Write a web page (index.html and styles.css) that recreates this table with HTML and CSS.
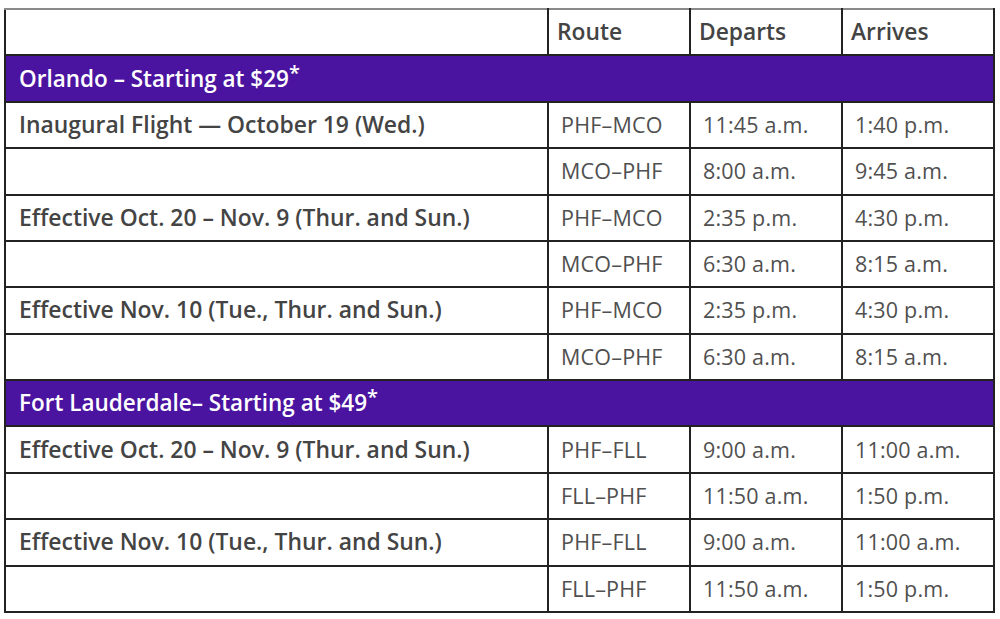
FILE: index.html
```html
<!DOCTYPE html>
<html>
<head>
<meta charset="utf-8">
<link rel="stylesheet" href="styles.css">
</head>
<body>
<table class="schedule">
  <colgroup>
    <col class="c-desc"><col class="c-route"><col class="c-time"><col class="c-time">
  </colgroup>
  <thead>
    <tr class="head">
      <th></th><th>Route</th><th>Departs</th><th>Arrives</th>
    </tr>
  </thead>
  <tbody>
    <tr class="group"><td colspan="4">Orlando – Starting at $29<sup>*</sup></td></tr>
    <tr><td class="label">Inaugural Flight — October 19 (Wed.)</td><td>PHF–MCO</td><td>11:45 a.m.</td><td>1:40 p.m.</td></tr>
    <tr><td class="label"></td><td>MCO–PHF</td><td>8:00 a.m.</td><td>9:45 a.m.</td></tr>
    <tr><td class="label">Effective Oct. 20 – Nov. 9 (Thur. and Sun.)</td><td>PHF–MCO</td><td>2:35 p.m.</td><td>4:30 p.m.</td></tr>
    <tr><td class="label"></td><td>MCO–PHF</td><td>6:30 a.m.</td><td>8:15 a.m.</td></tr>
    <tr><td class="label">Effective Nov. 10 (Tue., Thur. and Sun.)</td><td>PHF–MCO</td><td>2:35 p.m.</td><td>4:30 p.m.</td></tr>
    <tr><td class="label"></td><td>MCO–PHF</td><td>6:30 a.m.</td><td>8:15 a.m.</td></tr>
    <tr class="group"><td colspan="4">Fort Lauderdale– Starting at $49<sup>*</sup></td></tr>
    <tr><td class="label">Effective Oct. 20 – Nov. 9 (Thur. and Sun.)</td><td>PHF–FLL</td><td>9:00 a.m.</td><td>11:00 a.m.</td></tr>
    <tr><td class="label"></td><td>FLL–PHF</td><td>11:50 a.m.</td><td>1:50 p.m.</td></tr>
    <tr><td class="label">Effective Nov. 10 (Tue., Thur. and Sun.)</td><td>PHF–FLL</td><td>9:00 a.m.</td><td>11:00 a.m.</td></tr>
    <tr><td class="label"></td><td>FLL–PHF</td><td>11:50 a.m.</td><td>1:50 p.m.</td></tr>
  </tbody>
</table>
</body>
</html>
```
FILE: styles.css
```css
html, body {
  margin: 0;
  padding: 0;
  background: #ffffff;
}
body {
  padding: 8px 0 0 4px;
}
.schedule {
  border-collapse: collapse;
  width: 990px;
  table-layout: fixed;
  font-family: "Open Sans", "Liberation Sans", sans-serif;
  color: #505050;
}
.c-desc { width: 543px; }
.c-route { width: 142px; }
.c-time { width: 152px; }
.schedule th,
.schedule td {
  border: 2px solid #222222;
  height: 44.38px;
  padding: 0 12px;
  text-align: left;
  vertical-align: middle;
  white-space: nowrap;
  font-size: 21.5px;
  font-weight: 400;
  line-height: 26px;
  letter-spacing: 0.2px;
}
.schedule thead th {
  border-top-color: #8a8a8a;
  font-size: 22.8px;
  font-weight: 600;
  color: #444444;
  padding-left: 8px;
  letter-spacing: 0;
}
.schedule td.label {
  font-size: 22.9px;
  font-weight: 600;
  color: #444444;
  padding-left: 13px;
  letter-spacing: 0;
}
.group td {
  background: #4b14a0;
  color: #ffffff;
  font-size: 22.5px;
  font-weight: 600;
  padding-left: 13px;
  letter-spacing: 0;
}
.group sup {
  font-size: 20px;
  line-height: 0;
  vertical-align: 7px;
}
```
